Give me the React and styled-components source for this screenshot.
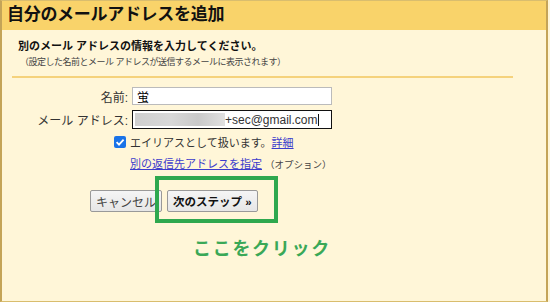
import React from "react";
import styled, { createGlobalStyle } from "styled-components";

const GlobalStyle = createGlobalStyle`
  html, body {
    margin: 0;
    padding: 0;
    background: #fff6d8;
  }
  body {
    font-family: Arial, "Liberation Sans", "Noto Sans CJK JP", sans-serif;
    color: #222;
  }
`;

const App = () => {
  return (
    <>
      <GlobalStyle />
      <Panel>
        <Header>自分のメールアドレスを追加</Header>
        <Body>
          <Intro>
            <h3>別のメール アドレスの情報を入力してください。</h3>
            <p>（設定した名前とメール アドレスが送信するメールに表示されます）</p>
          </Intro>
          <Divider />
          <Form>
            <Label>名前:</Label>
            <Input defaultValue="蛍" />
            <Label>メール アドレス:</Label>
            <EmailBox>
              <Blur />
              <span>+sec@gmail.com</span>
              <Caret />
            </EmailBox>
            <CheckCell>
              <Check viewBox="0 0 12 12">
                <rect x="0" y="0" width="12" height="12" rx="2" fill="#1a73e8" />
                <path d="M2.6 6.2 L5 8.6 L9.6 3.6" stroke="#fff" strokeWidth="1.8" fill="none" />
              </Check>
            </CheckCell>
            <Row>
              エイリアスとして扱います。<Link>詳細</Link>
            </Row>
            <span />
            <Row>
              <Link>別の返信先アドレスを指定</Link>
              <Note>（オプション）</Note>
            </Row>
          </Form>
          <Actions>
            <Button>キャンセル</Button>
            <Button $primary>次のステップ »</Button>
            <Highlight />
          </Actions>
          <Callout>ここをクリック</Callout>
        </Body>
      </Panel>
    </>
  );
};

export default App;

const Panel = styled.div`
  width: 544px;
  height: 300px;
  border: 1px solid #d9bd6e;
  border-left: 2px solid #c4a458;
  border-right: 2px solid #c4a458;
  background: #fff6d8;
  overflow: hidden;
`;

const Header = styled.div`
  height: 29px;
  line-height: 28px;
  background: #f9d36a;
  padding-left: 5px;
  font-size: 17px;
  font-weight: 700;
  color: #111;
  letter-spacing: -0.3px;
`;

const Body = styled.div`
  padding: 0 33px 0 10px;
`;

const Intro = styled.div`
  padding: 9px 0 0 6px;
  & h3 {
    margin: 0;
    font-size: 11px;
    font-weight: 700;
    line-height: 15px;
    color: #111;
  }
  & p {
    margin: 2px 0 0 2px;
    font-size: 9px;
    letter-spacing: -0.5px;
    line-height: 12px;
    color: #444;
  }
`;

const Divider = styled.div`
  height: 2px;
  background: #f5d27c;
  margin-top: 8px;
`;

const Form = styled.div`
  display: grid;
  grid-template-columns: 116px 200px;
  column-gap: 4px;
  row-gap: 5px;
  align-items: center;
  margin-top: 9px;
  font-size: 11px;
`;

const Label = styled.label`
  text-align: right;
  font-size: 12px;
  color: #333;
`;

const Input = styled.input`
  box-sizing: border-box;
  height: 18px;
  width: 200px;
  border: 1px solid #bbb;
  background: #fff;
  padding: 0 4px;
  font-size: 12px;
  font-family: inherit;
  outline: none;
`;

const EmailBox = styled.div`
  box-sizing: border-box;
  height: 19px;
  width: 200px;
  border: 1px solid #111;
  background: #fff;
  display: flex;
  align-items: center;
  padding: 0 2px;
  font-size: 12px;
  color: #333;
`;

const Blur = styled.div`
  width: 90px;
  height: 13px;
  background: linear-gradient(90deg, #cfcfcf, #d8d8d8 40%, #c9c9c9 70%, #e0e0e0);
`;

const Caret = styled.div`
  width: 1px;
  height: 12px;
  background: #111;
`;

const CheckCell = styled.div`
  display: flex;
  justify-content: flex-end;
  padding-right: 2px;
`;

const Check = styled.svg`
  width: 12px;
  height: 12px;
`;

const Row = styled.div`
  margin-left: -2px;
  font-size: 11px;
  color: #333;
  white-space: nowrap;
`;

const Link = styled.a`
  color: #3c3ccc;
  text-decoration: underline;
  cursor: pointer;
`;

const Note = styled.span`
  font-size: 9.5px;
  color: #444;
  margin-left: 3px;
`;

const Actions = styled.div`
  position: relative;
  display: flex;
  gap: 5px;
  margin: 19px 0 0 78px;
`;

const Button = styled.button`
  height: 22px;
  padding: 0 5px;
  border: 1px solid #999;
  border-radius: 2px;
  background: linear-gradient(#f5f5f5, #e6e6e6);
  font-family: inherit;
  font-size: ${(p) => (p.$primary ? "11.5px" : "12px")};
  font-weight: ${(p) => (p.$primary ? 700 : 400)};
  color: ${(p) => (p.$primary ? "#111" : "#444")};
`;

const Highlight = styled.div`
  position: absolute;
  left: 65px;
  top: -14px;
  width: 115px;
  height: 39px;
  border: 4px solid #2ea84e;
  pointer-events: none;
`;

const Callout = styled.div`
  margin: 22px 0 0 181px;
  font-size: 18px;
  font-weight: 700;
  color: #3aa857;
  letter-spacing: 1.7px;
`;
